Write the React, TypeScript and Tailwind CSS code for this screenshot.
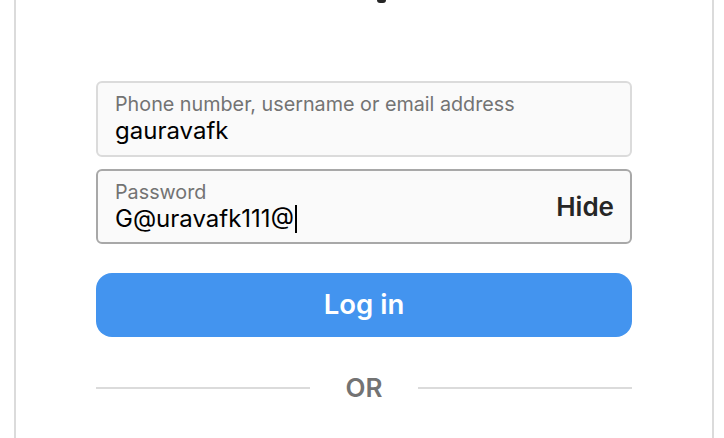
export default function App() {
  return (
    <div className="h-[438px] w-[724px] overflow-hidden bg-white pl-[14px] pr-[10px] font-['Inter','Noto_Sans',sans-serif]">
      <div className="flex h-full flex-col border-x-2 border-[#dbdbdb] px-[80px]">
        {/* bottom of the wordmark peeking in at the top */}
        <div className="flex h-[3px] justify-center">
          <div className="ml-[34px] h-[3px] w-[9px] rounded-b-full bg-[#262626]" />
        </div>

        <div className="mt-[78px] flex flex-col">
          <div className="flex h-[76px] flex-col justify-center rounded-[6px] border-2 border-[#dbdbdb] bg-[#fafafa] px-[17px]">
            <span className="text-[19.75px] leading-[24px] text-[#737373]">
              Phone number, username or email address
            </span>
            <span className="text-[24px] leading-[30px] text-black">gauravafk</span>
          </div>

          <div className="mt-[12px] flex h-[75px] items-center rounded-[6px] border-2 border-[#a8a8a8] bg-[#fafafa] pl-[17px] pr-[16px]">
            <div className="flex flex-1 flex-col">
              <span className="text-[19.75px] leading-[24px] text-[#737373]">Password</span>
              <span className="flex items-center text-[24px] leading-[30px] text-black">
                G@uravafk111@
                <span className="ml-[1px] h-[28px] w-[2px] bg-black" />
              </span>
            </div>
            <span className="text-[26px] font-semibold text-[#262626]">Hide</span>
          </div>

          <button className="mt-[29px] flex h-[64px] items-center justify-center rounded-[16px] bg-[#4394ef] text-[27.5px] font-semibold text-white">
            Log in
          </button>

          <div className="mt-[31px] flex items-center">
            <div className="h-[2px] flex-1 bg-[#dbdbdb]" />
            <span className="mx-[36px] text-[26px] font-semibold text-[#737373]">OR</span>
            <div className="h-[2px] flex-1 bg-[#dbdbdb]" />
          </div>
        </div>
      </div>
    </div>
  );
}
